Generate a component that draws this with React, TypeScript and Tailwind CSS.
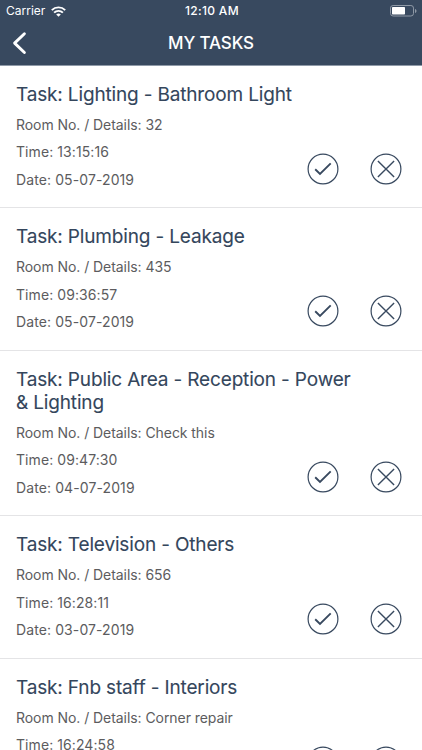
type Task = {
  id: number;
  title: string;
  details: string;
  time: string;
  date: string;
};

const tasks: Task[] = [
  { id: 1, title: "Lighting - Bathroom Light", details: "32", time: "13:15:16", date: "05-07-2019" },
  { id: 2, title: "Plumbing - Leakage", details: "435", time: "09:36:57", date: "05-07-2019" },
  { id: 3, title: "Public Area - Reception - Power & Lighting", details: "Check this", time: "09:47:30", date: "04-07-2019" },
  { id: 4, title: "Television - Others", details: "656", time: "16:28:11", date: "03-07-2019" },
  { id: 5, title: "Fnb staff - Interiors", details: "Corner repair", time: "16:24:58", date: "03-07-2019" },
];

export default function App() {
  return (
    <div className="h-screen flex flex-col overflow-hidden bg-white font-['Inter',sans-serif]">
      <header className="shrink-0 bg-[#38495f] text-white border-b border-[#8f9aa8]">
        <StatusBar />
        <div className="grid grid-cols-[48px_1fr_48px] items-center h-[42.5px]">
          <button aria-label="Back" className="pl-[12px]">
            <svg width="16" height="24" viewBox="0 0 16 24" fill="none">
              <path d="M12.4 2.7 2.6 12.1l9.8 9.4" stroke="currentColor" strokeWidth="2.9" strokeLinecap="round" strokeLinejoin="round" />
            </svg>
          </button>
          <h1 className="text-center text-[17px] leading-[22px] font-medium tracking-[-0.15px]">MY TASKS</h1>
        </div>
      </header>

      <main className="flex-1 min-h-0 overflow-hidden">
        {tasks.map((task) => (
          <TaskRow key={task.id} task={task} />
        ))}
      </main>
    </div>
  );
}

function StatusBar() {
  return (
    <div className="grid grid-cols-3 items-center h-[22px] pl-[6px] pr-[5px] text-[12px] leading-[22px]">
      <div className="flex items-center gap-[6px]">
        <span>Carrier</span>
        <svg width="15" height="11" viewBox="0 0 15 11" fill="none" stroke="currentColor" strokeWidth="1.9">
          <path d="M.8 4.1a9.5 9.5 0 0 1 13.4 0" />
          <path d="M3.1 6.7a6.2 6.2 0 0 1 8.8 0" />
          <path d="M7.5 10.8 5.2 8.5a3.3 3.3 0 0 1 4.6 0z" fill="currentColor" stroke="none" />
        </svg>
      </div>
      <span className="text-center font-medium tracking-[0.3px] pl-px">12:10 AM</span>
      <svg className="justify-self-end" width="27" height="12" viewBox="0 0 27 12" fill="none">
        <rect x=".5" y=".5" width="23" height="10.5" rx="2.6" stroke="#8f99a6" />
        <rect x="2" y="2" width="13" height="7.5" rx=".7" fill="#fff" />
        <path d="M25 4v4c.9-.3 1.5-1.1 1.5-2S25.9 4.3 25 4z" fill="#8f99a6" />
      </svg>
    </div>
  );
}

function TaskRow({ task }: { task: Task }) {
  return (
    <section className="flex items-end justify-between pt-[17px] pb-[14px] pl-4 pr-[20px] border-b border-[#e4e4e6]">
      <div className="w-[350px] -mr-[60px]">
        <h2 className="mb-[5px] text-[19px] leading-[23px] tracking-[-0.16px] text-[#34465c] [-webkit-text-stroke:0.1px_#34465c]">
          Task: {task.title}
        </h2>
        <div className="text-[14px] leading-[27.5px] text-[#5c5c5e]">
          <p className="tracking-[-0.06px]">Room No. / Details: {task.details}</p>
          <p className="tracking-[0.08px]">Time: {task.time}</p>
          <p className="tracking-[0.1px]">Date: {task.date}</p>
        </div>
      </div>
      <div className="flex gap-[31px] pb-[8.5px] text-[#38495f]">
        <button aria-label="Complete task">
          <svg className="block" width="32" height="32" viewBox="0 0 32 32" fill="none" stroke="currentColor">
            <circle cx="16" cy="16" r="14.9" strokeWidth="1.2" />
            <path d="m8.2 16.2 4.8 4.7L23.7 10.4" strokeWidth="1.9" />
          </svg>
        </button>
        <button aria-label="Reject task">
          <svg className="block" width="32" height="32" viewBox="0 0 32 32" fill="none" stroke="currentColor">
            <circle cx="16" cy="16" r="14.9" strokeWidth="1.2" />
            <path d="m7.9 7.9 16.2 16.2M24.1 7.9 7.9 24.1" strokeWidth="1.4" />
          </svg>
        </button>
      </div>
    </section>
  );
}
